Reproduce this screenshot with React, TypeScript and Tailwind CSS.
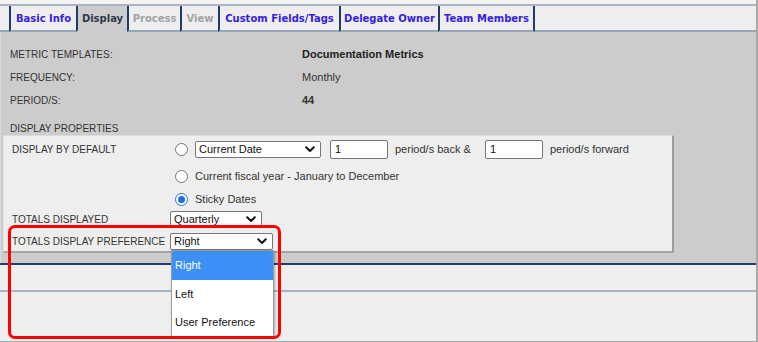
import React from "react";

const Chevron = () => (
  <svg width="10" height="7" viewBox="0 0 10 7" className="shrink-0">
    <path d="M1.2 1.3 L5 5 L8.8 1.3" fill="none" stroke="#111" strokeWidth="2" strokeLinecap="round" strokeLinejoin="round" />
  </svg>
);

const Select = ({ text, w }: { text: string; w: string }) => (
  <div className={`flex h-[17px] items-center justify-between rounded-[2px] border border-[#767676] bg-white pl-[3px] pr-[5px] text-[11px] text-[#111] ${w}`}>
    <span className="leading-none">{text}</span>
    <Chevron />
  </div>
);

const Radio = ({ checked }: { checked?: boolean }) =>
  checked ? (
    <div className="flex h-[13px] w-[13px] shrink-0 items-center justify-center rounded-full border-[1.5px] border-[#2a74e6] bg-white">
      <div className="h-[7px] w-[7px] rounded-full bg-[#1a6fe6]" />
    </div>
  ) : (
    <div className="h-[13px] w-[13px] shrink-0 rounded-full border border-[#767676] bg-white" />
  );

const Input = () => (
  <div className="flex h-[19px] w-[58px] items-center rounded-[2px] border border-[#767676] bg-white pl-[4px] text-[11px] text-[#111]">1</div>
);

const tabBase =
  "flex items-center justify-center border-l-2 border-b-2 border-l-[#1f3b66] text-[10px] font-bold font-['DejaVu_Sans',Verdana,sans-serif]";

export default function App() {
  return (
    <div className="relative h-[342px] w-[758px] overflow-hidden border-r-2 border-[#a8a8a8] bg-[#eeeeee] font-['Liberation_Sans',Arial,sans-serif]">
      {/* top strip */}
      <div className="h-[4px] bg-[#f3f3f3]" />
      {/* tab bar */}
      <div className="flex h-[28px] border-t-2 border-[#a9b5c5] bg-[#eeeeee]">
        <div className="w-[9px] border-b-2 border-[#98a6b9]" />
        <div className={`${tabBase} w-[67px] border-b-[#98a6b9] text-[#3522e0]`}>Basic Info</div>
        <div className={`${tabBase} w-[51px] border-b-[#cccccc] bg-[#cccccc] text-[#2e3a4a]`}>Display</div>
        <div className={`${tabBase} w-[53px] border-b-[#98a6b9] text-[#a3a3a3]`}>Process</div>
        <div className={`${tabBase} w-[38px] border-b-[#98a6b9] text-[#a3a3a3]`}>View</div>
        <div className={`${tabBase} w-[121px] border-b-[#98a6b9] text-[#3522e0]`}>Custom Fields/Tags</div>
        <div className={`${tabBase} w-[99px] border-b-[#98a6b9] text-[#3522e0]`}>Delegate Owner</div>
        <div className={`${tabBase} w-[97px] border-r-2 border-r-[#1f3b66] border-b-[#98a6b9] text-[#3522e0]`}>Team Members</div>
        <div className="flex-1 border-b-2 border-[#98a6b9]" />
      </div>

      {/* content */}
      <div className="h-[231px] border-l border-[#dadada] bg-[#cccccc] pt-[11px]">
        <div className="pl-[9px] text-[#333]">
          <div className="flex h-[23px] items-center">
            <div className="w-[292px] text-[10px]">METRIC TEMPLATES:</div>
            <div className="text-[11px] font-bold text-[#222]">Documentation Metrics</div>
          </div>
          <div className="flex h-[23px] items-center">
            <div className="w-[292px] text-[10px]">FREQUENCY:</div>
            <div className="text-[11px]">Monthly</div>
          </div>
          <div className="flex h-[22px] items-center">
            <div className="w-[292px] text-[10px]">PERIOD/S:</div>
            <div className="text-[11px] font-bold text-[#333]">44</div>
          </div>
          <div className="mt-[10px] flex h-[14px] items-center text-[10px]">DISPLAY PROPERTIES</div>
        </div>

        {/* inner box */}
        <div className="ml-[2px] h-[118px] w-[671px] border-l border-t border-b-2 border-r-2 border-l-[#e2e2e2] border-t-[#dcdcdc] border-r-[#9c9c9c] border-b-[#a4a4a4] bg-[#eeeeee] pl-[8px] pt-[4px] text-[#333]">
          <div className="flex h-[19px] items-center">
            <div className="w-[158px] text-[10px]">DISPLAY BY DEFAULT</div>
            <div className="flex items-center pl-[5px] text-[11px]">
              <div className="mr-[7px]"><Radio /></div>
              <Select text="Current Date" w="w-[126px]" />
              <div className="ml-[9px]"><Input /></div>
              <div className="ml-[7px] w-[90px]">period/s back &amp;</div>
              <Input />
              <div className="ml-[7px]">period/s forward</div>
            </div>
          </div>
          <div className="mt-[8px] flex h-[18px] items-center">
            <div className="w-[158px]" />
            <div className="flex items-center pl-[5px] text-[11px]">
              <div className="mr-[7px]"><Radio /></div>
              <span>Current fiscal year - January to December</span>
            </div>
          </div>
          <div className="mt-[5px] flex h-[18px] items-center">
            <div className="w-[158px]" />
            <div className="flex items-center pl-[5px] text-[11px]">
              <div className="mr-[7px]"><Radio checked /></div>
              <span>Sticky Dates</span>
            </div>
          </div>
          <div className="mt-[3px] flex h-[17px] items-center">
            <div className="w-[158px] text-[10px]">TOTALS DISPLAYED</div>
            <Select text="Quarterly" w="w-[92px]" />
          </div>
          <div className="mt-[5px] flex h-[17px] items-center">
            <div className="w-[158px] text-[10px]">TOTALS DISPLAY PREFERENCE</div>
            <Select text="Right" w="w-[103px]" />
          </div>
        </div>
      </div>

      {/* bottom bands */}
      <div className="h-[2px] bg-[#1d3f6e]" />
      <div className="h-[25px] bg-[#eeeeee]" />
      <div className="h-[2px] bg-[#a7b3c3]" />
      <div className="h-[50px] border-b border-[#a8a8a8] bg-[#eeeeee]" />

      {/* dropdown list */}
      <div className="absolute left-[171px] top-[250px] w-[103px] border border-[#9a9a9a] bg-white text-[11px] text-[#111] shadow-[1px_1px_2px_rgba(0,0,0,0.3)]">
        <div className="flex h-[29px] items-center bg-[#3b8ff5] pl-[3px] text-white">Right</div>
        <div className="flex h-[28px] items-center pl-[3px]">Left</div>
        <div className="flex h-[28px] items-center pl-[3px]">User Preference</div>
      </div>

      {/* red highlight */}
      <div className="pointer-events-none absolute left-[8px] top-[225px] h-[114px] w-[273px] rounded-[7px] border-[3px] border-[#ff0000]" />
    </div>
  );
}
